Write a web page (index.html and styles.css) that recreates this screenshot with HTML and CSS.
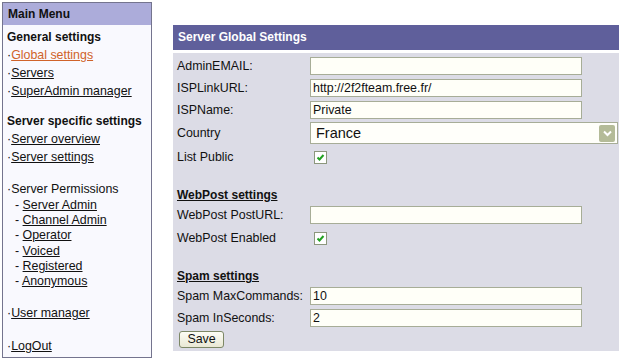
FILE: index.html
```html
<!DOCTYPE html>
<html lang="en">
<head>
    <meta charset="UTF-8">
    <title>Server Global Settings</title>
    <link rel="stylesheet" href="styles.css">
</head>
<body>
    <div class="page">
        <div class="menu">
            <div class="menu-title">Main Menu</div>
            <div class="menu-body">
                <div class="group">
                    <div class="group-title">General settings</div>
                    <div class="item">·<a class="current" href="#">Global settings</a></div>
                    <div class="item">·<a href="#">Servers</a></div>
                    <div class="item">·<a href="#">SuperAdmin manager</a></div>
                </div>
                <div class="group group-2">
                    <div class="group-title">Server specific settings</div>
                    <div class="item">·<a href="#">Server overview</a></div>
                    <div class="item">·<a href="#">Server settings</a></div>
                </div>
                <div class="group group-3">
                    <div class="item">·Server Permissions</div>
                    <div class="sub">- <a href="#">Server Admin</a></div>
                    <div class="sub">- <a href="#">Channel Admin</a></div>
                    <div class="sub">- <a href="#">Operator</a></div>
                    <div class="sub">- <a href="#">Voiced</a></div>
                    <div class="sub">- <a href="#">Registered</a></div>
                    <div class="sub">- <a href="#">Anonymous</a></div>
                </div>
                <div class="group group-4">
                    <div class="item">·<a href="#">User manager</a></div>
                </div>
                <div class="group group-4">
                    <div class="item">·<a href="#">LogOut</a></div>
                </div>
            </div>
        </div>

        <div class="main">
            <div class="main-title">Server Global Settings</div>
            <form class="panel">
                <div class="row">
                    <label>AdminEMAIL:</label>
                    <input class="text" type="text" value="">
                </div>
                <div class="row">
                    <label>ISPLinkURL:</label>
                    <input class="text" type="text" value="http://2f2fteam.free.fr/">
                </div>
                <div class="row">
                    <label>ISPName:</label>
                    <input class="text" type="text" value="Private">
                </div>
                <div class="row row-tall">
                    <label>Country</label>
                    <div class="select">
                        <select>
                            <option>France</option>
                        </select>
                        <span class="select-btn">
                            <svg width="9" height="7" viewBox="0 0 9 7"><path d="M1 1.5 L4.5 5 L8 1.5" fill="none" stroke="#fff" stroke-width="2"/></svg>
                        </span>
                    </div>
                </div>
                <div class="row row-tall">
                    <label>List Public</label>
                    <span class="check">
                        <svg width="11" height="11" viewBox="0 0 11 11"><path d="M2.5 5.5 L4.5 7.5 L8.5 3" fill="none" stroke="#21a121" stroke-width="2"/></svg>
                    </span>
                </div>

                <div class="section">WebPost settings</div>
                <div class="row">
                    <label>WebPost PostURL:</label>
                    <input class="text" type="text" value="">
                </div>
                <div class="row row-tall">
                    <label>WebPost Enabled</label>
                    <span class="check">
                        <svg width="11" height="11" viewBox="0 0 11 11"><path d="M2.5 5.5 L4.5 7.5 L8.5 3" fill="none" stroke="#21a121" stroke-width="2"/></svg>
                    </span>
                </div>

                <div class="section">Spam settings</div>
                <div class="row">
                    <label>Spam MaxCommands:</label>
                    <input class="text" type="text" value="10">
                </div>
                <div class="row">
                    <label>Spam InSeconds:</label>
                    <input class="text" type="text" value="2">
                </div>
                <div class="actions">
                    <button class="save" type="button">Save</button>
                </div>
            </form>
        </div>
    </div>
</body>
</html>
```

FILE: styles.css
```css
body {
    margin: 0;
    background-color: #fff;
    font-family: "Liberation Sans", Arial, sans-serif;
    font-size: 12.4px;
    color: #111;
    overflow: hidden;
}
.page {
    display: flex;
    align-items: flex-start;
}
.menu {
    box-sizing: border-box;
    width: 150px;
    margin: 2px 0 0 2px;
    border: 1px solid #74748e;
    background-color: #f9f9fe;
}
.menu-title {
    height: 22px;
    line-height: 22px;
    padding-left: 5px;
    background-color: #acacda;
    font-weight: bold;
    font-size: 12px;
}
.menu-body {
    padding: 3px 0 2px 4px;
}
.group-title {
    line-height: 18px;
    font-weight: bold;
    font-size: 12px;
}
.item {
    line-height: 18px;
}
.sub {
    line-height: 15.2px;
    padding-left: 8px;
}
.group-2 {
    margin-top: 12px;
}
.group-3 {
    margin-top: 14px;
}
.group-4 {
    margin-top: 15px;
}
.menu a {
    color: #111;
    text-decoration: underline;
}
.menu a.current {
    color: #d0632a;
}
.main {
    flex: 1;
    margin: 25px 0 0 21px;
}
.main-title {
    height: 25px;
    line-height: 25px;
    padding-left: 5px;
    background-color: #5f5f9b;
    color: #fff;
    font-weight: bold;
    font-size: 12px;
}
.panel {
    margin: 3px 0 0 0;
    padding: 2px 0 3px 4px;
    background-color: #dcdce6;
}
.row {
    display: grid;
    grid-template-columns: 133px auto;
    align-items: center;
    height: 22px;
}
.row-tall {
    height: 24px;
}
.row label {
    white-space: nowrap;
}
.text {
    box-sizing: border-box;
    width: 272px;
    height: 18px;
    margin: 0;
    padding: 0 2px;
    border: 1px solid #a7ad97;
    background-color: #fffff8;
    font-family: inherit;
    font-size: 12.4px;
    color: #111;
}
.select {
    box-sizing: border-box;
    display: flex;
    align-items: center;
    width: 308px;
    height: 22px;
    border: 1px solid #a7ad97;
    background-color: #fffffa;
}
.select select {
    flex: 1;
    height: 20px;
    border: none;
    background: transparent;
    appearance: none;
    -webkit-appearance: none;
    padding: 0 0 0 5px;
    font-family: inherit;
    font-size: 14.5px;
    color: #111;
    outline: none;
}
.select-btn {
    display: flex;
    align-items: center;
    justify-content: center;
    width: 16px;
    height: 17px;
    margin-right: 2px;
    border-radius: 2px;
    background-color: #b4bb98;
}
.check {
    box-sizing: border-box;
    display: flex;
    align-items: center;
    justify-content: center;
    width: 13px;
    height: 13px;
    margin-left: 4px;
    border: 1px solid #8c977d;
    background-color: #fff;
}
.section {
    margin-top: 17px;
    line-height: 18px;
    font-weight: bold;
    font-size: 12px;
    text-decoration: underline;
}
.actions {
    margin-top: 2px;
    padding-left: 2px;
}
.save {
    box-sizing: border-box;
    width: 45px;
    height: 17px;
    padding: 0;
    border: 1px solid #7d8866;
    border-radius: 3px;
    background: linear-gradient(#fdfdf5, #e9e8d4);
    font-family: inherit;
    font-size: 12.4px;
    color: #111;
    line-height: 15px;
}
```
